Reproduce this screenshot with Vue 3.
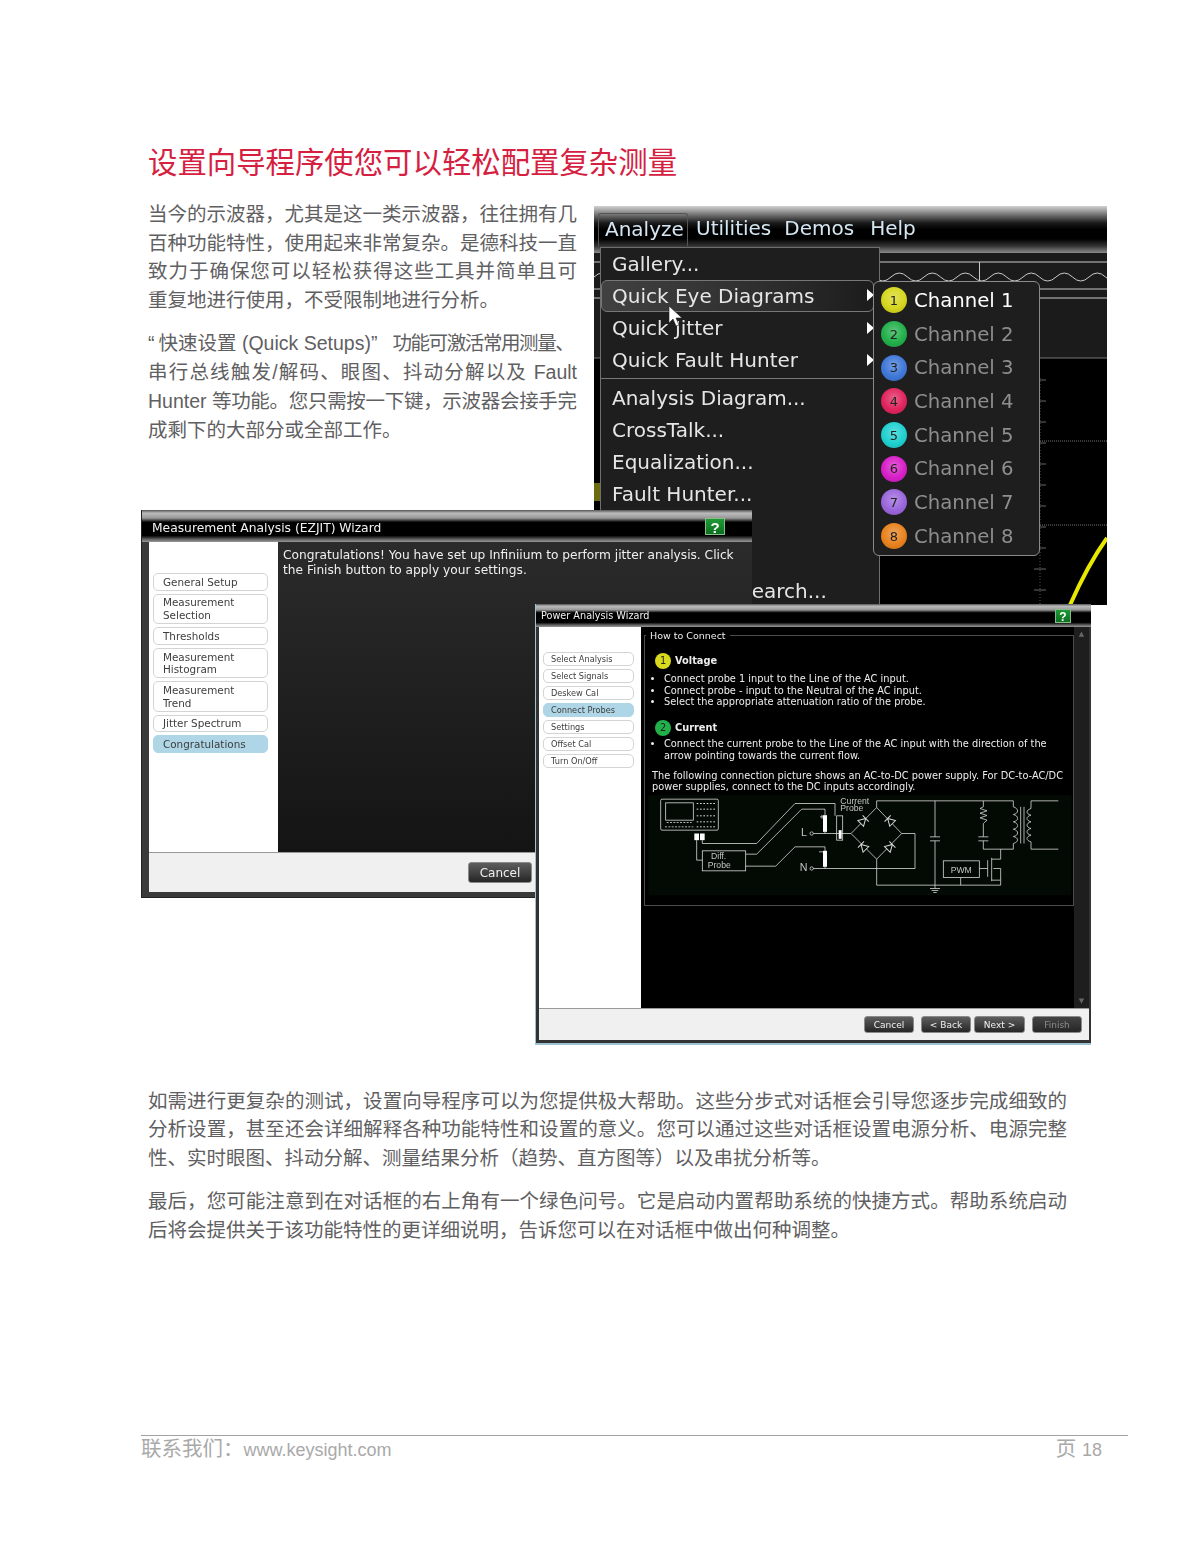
<script setup>
const menuTop = ['Gallery...']
const quick = ['Quick Eye Diagrams', 'Quick Jitter', 'Quick Fault Hunter']
const tools = ['Analysis Diagram...', 'CrossTalk...', 'Equalization...', 'Fault Hunter...']
const channels = [
  { n: 1, c: '#d6d61e' }, { n: 2, c: '#22b04a' }, { n: 3, c: '#3f78d8' }, { n: 4, c: '#e0245e' },
  { n: 5, c: '#1fd0d0' }, { n: 6, c: '#d81fc8' }, { n: 7, c: '#9a66dc' }, { n: 8, c: '#e8821e' }
]
const nav1 = [
  { t: 'General Setup' }, { t: 'Measurement Selection', w: 1 }, { t: 'Thresholds' },
  { t: 'Measurement Histogram', w: 1 }, { t: 'Measurement Trend', w: 1 }, { t: 'Jitter Spectrum' },
  { t: 'Congratulations', on: 1 }
]
const nav2 = ['Select Analysis', 'Select Signals', 'Deskew Cal', 'Connect Probes', 'Settings', 'Offset Cal', 'Turn On/Off']
const ticks = Array.from({ length: 11 }, (_, i) => 127 + i * 21)
let wave = 'M0 24'
for (let x = 0; x < 520; x += 16.5) wave += ` q8.25 ${(Math.round(x / 16.5) % 2 ? 8 : -8)} 16.5 0`
const diodes = [
  { x: 655, y: 97, r: -45 }, { x: 735, y: 97, r: -135 },
  { x: 655, y: 175, r: -135 }, { x: 735, y: 175, r: -45 }
]
</script>

<template>
  <div class="page">
    <h1 class="title">设置向导程序使您可以轻松配置复杂测量</h1>

    <section class="stage">
      <div class="intro">
        <p>
          <span class="ln">当今的示波器，尤其是这一类示波器，往往拥有几</span>
          <span class="ln">百种功能特性，使用起来非常复杂。是德科技一直</span>
          <span class="ln">致力于确保您可以轻松获得这些工具并简单且可</span>
          <span class="ln end">重复地进行使用，不受限制地进行分析。</span>
        </p>
        <p>
          <span class="ln end"><span class="oq">“</span>快速设置 (Quick Setups)<span class="cq">”</span><span class="tight">功能可激活常用测量、</span></span>
          <span class="ln">串行总线触发/解码、眼图、抖动分解以及 Fault</span>
          <span class="ln end">Hunter <span class="snug">等功能。您只需按一下键，示波器会接手完</span></span>
          <span class="ln end">成剩下的大部分或全部工作。</span>
        </p>
      </div>

      <!-- Analyze menu screenshot -->
      <div class="shot">
        <div class="bar">
          <span class="tab">Analyze</span>
          <span class="bar-item u">Utilities</span>
          <span class="bar-item d">Demos</span>
          <span class="bar-item h">Help</span>
        </div>
        <svg class="scope" width="513" height="352" viewBox="0 0 513 352">
          <rect width="513" height="352" fill="#1b1b1b" />
          <rect y="105" width="513" height="247" fill="#000" />
          <g stroke="#c9c9c9" stroke-width="1" fill="none">
            <path d="M0 9H513M0 36H513M0 45H513M385.5 9V36" />
            <path :d="wave" />
            <path d="M0 105H513" stroke="#777" />
            <path d="M446 125V352" stroke="#555" stroke-dasharray="1 2" />
            <path d="M446 188H513M446 272H513" stroke="#777" stroke-dasharray="1 1" />
          </g>
          <path v-for="t in ticks" :key="t" :d="`M440 ${t}H452`" stroke="#666" />
          <path d="M476 352C488 325 500 303 513 285" stroke="#e8e800" stroke-width="4" fill="none" />
          <rect y="230" width="6" height="18" fill="#6b6b10" />
        </svg>

        <div class="menu">
          <div class="mi" v-for="m in menuTop" :key="m">{{ m }}</div>
          <div class="mi" v-for="(m, i) in quick" :key="m" :class="{ hot: i === 0 }">
            {{ m }}<i class="arrow"></i>
          </div>
          <div class="sep"></div>
          <div class="mi" v-for="m in tools" :key="m">{{ m }}</div>
          <div class="mi search">Search...</div>
        </div>

        <div class="fly">
          <div class="ch" v-for="c in channels" :key="c.n" :class="{ first: c.n === 1 }">
            <span class="dot" :style="{ backgroundColor: c.c }">{{ c.n }}</span>
            Channel {{ c.n }}
          </div>
        </div>

        <svg class="cursor" width="15" height="21" viewBox="0 0 15 21">
          <path d="M1 0V17L5 13L8 20L11 19L8 12H14Z" fill="#fff" stroke="#222" stroke-width=".6" />
        </svg>
      </div>

      <!-- EZJIT wizard -->
      <div class="win win1">
        <div class="tbar">
          <span>Measurement Analysis (EZJIT) Wizard</span>
          <b class="help">?</b>
        </div>
        <div class="wbody">
          <div class="nav">
            <div v-for="n in nav1" :key="n.t" class="nb" :class="{ on: n.on, two: n.w }">{{ n.t }}</div>
          </div>
          <div class="pane">Congratulations! You have set up Infiniium to perform jitter analysis. Click<br />the Finish button to apply your settings.</div>
        </div>
        <div class="foot"><button class="btn">Cancel</button></div>
      </div>

      <!-- Power wizard -->
      <div class="win win2">
        <div class="tbar">
          <span>Power Analysis Wizard</span>
          <b class="help">?</b>
        </div>
        <div class="wbody">
          <div class="nav">
            <div v-for="(n, i) in nav2" :key="n" class="nb" :class="{ on: i === 3 }">{{ n }}</div>
          </div>
          <div class="main">
            <fieldset class="group">
              <legend>How to Connect</legend>
              <div class="hd first"><span class="bd y">1</span>Voltage</div>
              <ul>
                <li>Connect probe 1 input to the Line of the AC input.</li>
                <li>Connect probe - input to the Neutral of the AC input.</li>
                <li>Select the appropriate attenuation ratio of the probe.</li>
              </ul>
              <div class="hd"><span class="bd g">2</span>Current</div>
              <ul class="u2">
                <li>Connect the current probe to the Line of the AC input with the direction of the<br />arrow pointing towards the current flow.</li>
              </ul>
              <p class="note">The following connection picture shows an AC-to-DC power supply. For DC-to-AC/DC<br />power supplies, connect to the DC inputs accordingly.</p>
              <svg class="diagram" width="430" height="107" viewBox="0 20 1290 320">
                <rect x="10" y="20" width="1270" height="300" fill="#030a04" />
                <g fill="none" stroke="#d8d8d8" stroke-width="2.4">
                  <rect x="47" y="32" width="173" height="93" rx="4" />
                  <rect x="62" y="43" width="83" height="52" />
                  <path d="M65 102H140M60 115H145" stroke-dasharray="6 4" />
                  <path d="M155 45H215M155 62H215M155 82H215M155 100H215M155 115H215" stroke-dasharray="5 5" stroke-width="3" />
                  <path d="M155 155V215H172M172 155V165H335L450 45H570V82" />
                  <rect x="172" y="187" width="130" height="60" />
                  <path d="M302 197H335L470 62H540V80M302 233H392L450 175H540V190" />
                  <path d="M505 135H618M505 240H810V135H770" />
                  <circle cx="500" cy="135" r="5" /><circle cx="500" cy="240" r="5" />
                  <rect x="575" y="82" width="18" height="73" />
                  <path d="M540 130V135M540 235V240M525 85H537M531 79V91M522 190H535" />
                  <path d="M695 57L618 135L695 212L770 135ZM695 57V37H1105M695 212V290H1067" />
                  <path d="M870 37V145M855 145H885M855 157H885M870 157V300M855 300H885M860 306H880M865 312H875" />
                  <path d="M1015 37V55L1005 60L1026 67L1005 74L1026 81L1005 88L1026 95L1015 105V145M1000 145H1030M1000 157H1030M1015 157V182H1105" />
                  <path d="M1105 37V55C1122 60 1122 75 1105 78C1122 82 1122 97 1105 100C1122 104 1122 119 1105 122C1122 126 1122 141 1105 144C1122 148 1122 160 1105 165V182" />
                  <path d="M1127 55V165M1137 55V165" />
                  <path d="M1240 37H1158V60C1142 65 1142 76 1158 80C1142 84 1142 96 1158 100C1142 104 1142 116 1158 120C1142 124 1142 136 1158 140C1142 144 1142 156 1158 160V182H1240" />
                  <rect x="895" y="217" width="108" height="50" />
                  <path d="M947 267V290M1003 240H1028M1028 215V265M1040 208V278M1040 212H1067V182M1040 275H1067V290M1045 240H1067V275" />
                  <g v-for="d in diodes" :key="d.x + '-' + d.y" :transform="`translate(${d.x} ${d.y}) rotate(${d.r})`">
                    <path d="M-11 -12V12L10 0ZM10 -13V13" fill="#030a04" stroke-width="3" />
                  </g>
                </g>
                <g fill="#fff">
                  <rect x="148" y="135" width="14" height="20" /><rect x="165" y="135" width="14" height="20" />
                  <rect x="534" y="80" width="12" height="50" /><rect x="534" y="187" width="12" height="48" />
                  <rect x="581" y="125" width="9" height="26" />
                </g>
                <g class="dtext" fill="#c4c4c4">
                  <text x="586" y="45">Current</text><text x="586" y="68">Probe</text>
                  <text x="198" y="212">Diff.</text><text x="188" y="238">Probe</text>
                  <text x="468" y="143" class="big">L</text><text x="464" y="246" class="big">N</text>
                  <text x="917" y="252">PWM</text>
                </g>
              </svg>
            </fieldset>
          </div>
          <div class="sbar"><span>▲</span><span>▼</span></div>
        </div>
        <div class="foot">
          <button class="btn">Cancel</button>
          <button class="btn">&lt; Back</button>
          <button class="btn">Next &gt;</button>
          <button class="btn off">Finish</button>
        </div>
      </div>
    </section>

    <section class="outro">
      <p>
        <span class="ln">如需进行更复杂的测试，设置向导程序可以为您提供极大帮助。这些分步式对话框会引导您逐步完成细致的</span>
        <span class="ln">分析设置，甚至还会详细解释各种功能特性和设置的意义。您可以通过这些对话框设置电源分析、电源完整</span>
        <span class="ln end">性、实时眼图、抖动分解、测量结果分析（趋势、直方图等）以及串扰分析等。</span>
      </p>
      <p>
        <span class="ln">最后，您可能注意到在对话框的右上角有一个绿色问号。它是启动内置帮助系统的快捷方式。帮助系统启动</span>
        <span class="ln end">后将会提供关于该功能特性的更详细说明，告诉您可以在对话框中做出何种调整。</span>
      </p>
    </section>

    <footer class="pfoot">
      <span class="cn">联系我们：<span class="url">www.keysight.com</span></span>
      <span class="cn">页 <span class="url">18</span></span>
    </footer>
  </div>
</template>

<style scoped>
.page {
  width: 1199px;
  height: 1551px;
  overflow: hidden;
  box-sizing: border-box;
  padding: 143px 0 0 148px;
  background: #fff;
  font-family: "Liberation Sans", "Noto Sans CJK SC", sans-serif;
  color: #5f6062;
}
.title {
  margin: 0 0 17px;
  font-size: 29.4px;
  line-height: 40px;
  font-weight: 400;
  color: #d5203f;
}
.stage { position: relative; height: 886.5px; }
.intro { width: 429px; }
p { margin: 0 0 14.6px; font-size: 19.5px; line-height: 28.7px; }
.ln { display: block; white-space: nowrap; text-align: justify; text-align-last: justify; }
.ln.end { text-align-last: left; }
.oq { margin-right: 4px; }
.cq { margin: 0 15px 0 0; }
.tight { letter-spacing: -1.4px; }
.snug { letter-spacing: -.3px; }
.outro { width: 919px; }

/* Analyze screenshot */
.shot {
  position: absolute;
  left: 446px;
  top: 6px;
  width: 513px;
  height: 399px;
  overflow: hidden;
  background: #000;
  font-family: "DejaVu Sans", sans-serif;
  font-size: 20px;
  color: #e6e6e6;
  filter: blur(.35px);
}
.bar {
  height: 47px;
  display: flex;
  align-items: center;
  background: linear-gradient(#d2d2d2 0, #8a8a8a 14%, #1a1a1a 36%, #000 50%, #000 70%, #333 85%, #8c8c8c 100%);
  color: #d5e6f2;
  line-height: 47px;
}
.tab {
  align-self: flex-start;
  box-sizing: border-box;
  width: 90px;
  height: 33px;
  margin: 7px 0 0 4px;
  padding-left: 6px;
  line-height: 31px;
  border: 1px solid #555;
  border-bottom: 0;
  border-radius: 3px 3px 0 0;
}
.u { margin-left: 8px; }
.d { margin-left: 13px; }
.h { margin-left: 16px; }
.bar-item { position: relative; top: -1px; }
.scope { display: block; }
.menu {
  position: absolute;
  left: 6px;
  top: 41px;
  width: 280px;
  height: 380px;
  box-sizing: border-box;
  background: #1e1e1e;
  border: 1px solid #6e6e6e;
}
.mi {
  position: relative;
  box-sizing: border-box;
  height: 32px;
  line-height: 32px;
  padding-left: 11px;
  white-space: nowrap;
}
.hot {
  margin: 0 5px 0 0;
  border: 1px solid #777;
  border-radius: 6px;
  padding-left: 10px;
  line-height: 30px;
  background: linear-gradient(90deg, #414141, #2e2e2e 60%, #1c1c1c);
}
.arrow {
  position: absolute;
  left: 266px;
  top: 10px;
  border-left: 7px solid #fff;
  border-top: 6px solid transparent;
  border-bottom: 6px solid transparent;
}
.hot .arrow { top: 8px; left: 265px; }
.sep { height: 1px; margin: 2px 0 3px; background: #777; }
.search { margin-top: 65px; padding-left: 138px; }
.fly {
  position: absolute;
  left: 279px;
  top: 75px;
  width: 167px;
  height: 275px;
  box-sizing: border-box;
  padding: 1.5px 0 0 7px;
  background: #1e1e1e;
  border: 1px solid #8a8a8a;
  border-radius: 6px;
  color: #8e8e8e;
  font-size: 19.7px;
}
.ch { display: flex; align-items: center; gap: 7px; height: 33.7px; white-space: nowrap; }
.ch.first { color: #fff; }
.dot {
  flex: none;
  width: 26px;
  height: 26px;
  border-radius: 50%;
  display: grid;
  place-items: center;
  font-size: 13px;
  color: #222;
  background-image: radial-gradient(circle at 50% 40%, rgba(255,255,255,.28), rgba(255,255,255,0) 55%, rgba(0,0,0,.18) 100%);
}
.cursor { position: absolute; left: 74px; top: 100px; }

/* Wizards */
.win {
  position: absolute;
  box-sizing: border-box;
  display: flex;
  flex-direction: column;
  font-family: "DejaVu Sans", sans-serif;
  background: #3a3a3a;
  filter: blur(.3px);
}
.tbar {
  position: relative;
  display: flex;
  align-items: center;
  flex: none;
  color: #f2f2f2;
  background: linear-gradient(#555 0, #bbb 10%, #999 25%, #000 38%, #000 80%, #666 92%, #999 100%);
}
.help {
  position: absolute;
  display: grid;
  place-items: center;
  background: linear-gradient(#1f9a35, #0c7020);
  color: #fff;
  font-family: "Liberation Sans", sans-serif;
  border: 1px solid #88bb88;
  box-sizing: border-box;
}
.wbody { flex: 1; min-height: 0; display: flex; }
.nav { flex: none; box-sizing: border-box; background: #fff; color: #3d3d3d; display: flex; flex-direction: column; }
.nb { box-sizing: border-box; background: #fff; border: 1px solid #d4d4d4; border-radius: 5px; }
.nb.on { background: #aed6e6; border-color: #aed6e6; }
.foot { flex: none; background: #f0f0f0; display: flex; align-items: center; border-top: 1px solid #999; }
.btn {
  flex: none;
  padding: 0;
  border: 1px solid #8a8a8a;
  border-radius: 3px;
  background: linear-gradient(#5e5e5e, #262626);
  color: #f0f0f0;
  font-family: "DejaVu Sans", sans-serif;
}
.btn.off { color: #8c8c8c; background: linear-gradient(#444, #262626); }

.win1 {
  left: -7px;
  top: 310px;
  width: 611px;
  height: 388px;
  padding: 0 0 5px 7px;
  border-left: 1px solid #222;
  border-bottom: 1px solid #222;
}
.win1 .tbar { height: 32px; margin-left: -7px; padding: 3px 0 0 10px; box-sizing: border-box; font-size: 12.3px; }
.win1 .help { left: 563px; top: 8px; width: 20px; height: 17px; font-size: 15px; }
.win1 .nav { width: 129px; padding: 31px 10px 0 4px; gap: 3px; font-size: 10.4px; line-height: 12.6px; }
.win1 .nb { padding: 1.6px 0 1.6px 9px; white-space: nowrap; }
.win1 .nb.two { padding-right: 30px; white-space: normal; }
.win1 .pane {
  flex: 1;
  padding: 6px 0 0 5px;
  font-size: 12.2px;
  line-height: 15px;
  white-space: nowrap;
  overflow: hidden;
  color: #f0f0f0;
  background: linear-gradient(#2b2b2b, #141414);
}
.win1 .foot { height: 39px; padding-left: 319px; }
.win1 .btn { width: 64px; height: 21px; font-size: 12px; }

.win2 {
  left: 387px;
  top: 404px;
  width: 556px;
  height: 441px;
  padding: 0 2px 3px 3px;
  border-left: 1px solid #9cc4d4;
  border-bottom: 2px solid #9cc4d4;
  background: #333;
}
.win2 .tbar { height: 23px; margin: 0 -2px 0 -3px; padding-left: 5px; font-size: 9.7px; }
.win2 .help { right: 20px; top: 5px; width: 16px; height: 14px; font-size: 12px; }
.win2 .nav { width: 102px; padding: 25px 7px 0 4px; gap: 3px; font-size: 8.2px; line-height: 12px; }
.win2 .nb { height: 14px; padding-left: 7px; line-height: 12px; }
.main { flex: 1; min-width: 0; background: #000; padding-left: 3px; color: #ededed; font-size: 9.8px; line-height: 11.7px; }
.group { margin: 3px 0 0; padding: 0; height: 276px; box-sizing: border-box; border: 1px solid #4c4c4c; min-width: 0; }
.group legend { margin-left: 1px; padding: 0 4px; font-size: 9.5px; line-height: 11px; }
.hd { display: flex; align-items: center; gap: 4px; height: 16px; margin: 12px 0 0 10px; font-weight: 700; }
.hd.first { margin-top: 12px; }
.bd {
  width: 16px;
  height: 16px;
  border-radius: 50%;
  display: grid;
  place-items: center;
  font-weight: 400;
  color: #222;
}
.bd.y { background: #d8d81c; }
.bd.g { background: #22b04a; }
ul { margin: 4px 0 0; padding: 0 0 0 19px; white-space: nowrap; }
.u2 { margin-top: 2px; }
li { padding: 0; }
li::marker { font-size: 10px; }
.note { margin: 8px 0 0 7px; font-size: 9.8px; line-height: 11.7px; white-space: nowrap; }
.diagram { display: block; margin: 2px 0 0; }
.dtext { font-family: "Liberation Sans", sans-serif; font-size: 26px; }
.dtext .big { font-size: 32px; }
.sbar {
  flex: none;
  width: 15px;
  background: #1e1e1e;
  color: #666;
  font-size: 7px;
  display: flex;
  flex-direction: column;
  justify-content: space-between;
  align-items: center;
  padding: 3px 0;
}
.win2 .foot { height: 31px; padding-left: 325px; gap: 7px; }
.win2 .btn { width: 50px; height: 17px; font-size: 9px; }
.win2 .btn:nth-child(3) { margin-left: -4px; width: 51px; }

.pfoot {
  position: relative;
  left: -7px;
  width: 987px;
  margin-top: 190px;
  box-sizing: border-box;
  display: flex;
  justify-content: space-between;
  padding: 0 26px 0 0;
  border-top: 1px solid #a2a2a2;
  line-height: 25px;
  color: #a9a9a9;
}
.cn { font-size: 20.5px; }
.url { font-size: 18px; }
</style>

<style>
html, body { margin: 0; background: #fff; }
</style>
